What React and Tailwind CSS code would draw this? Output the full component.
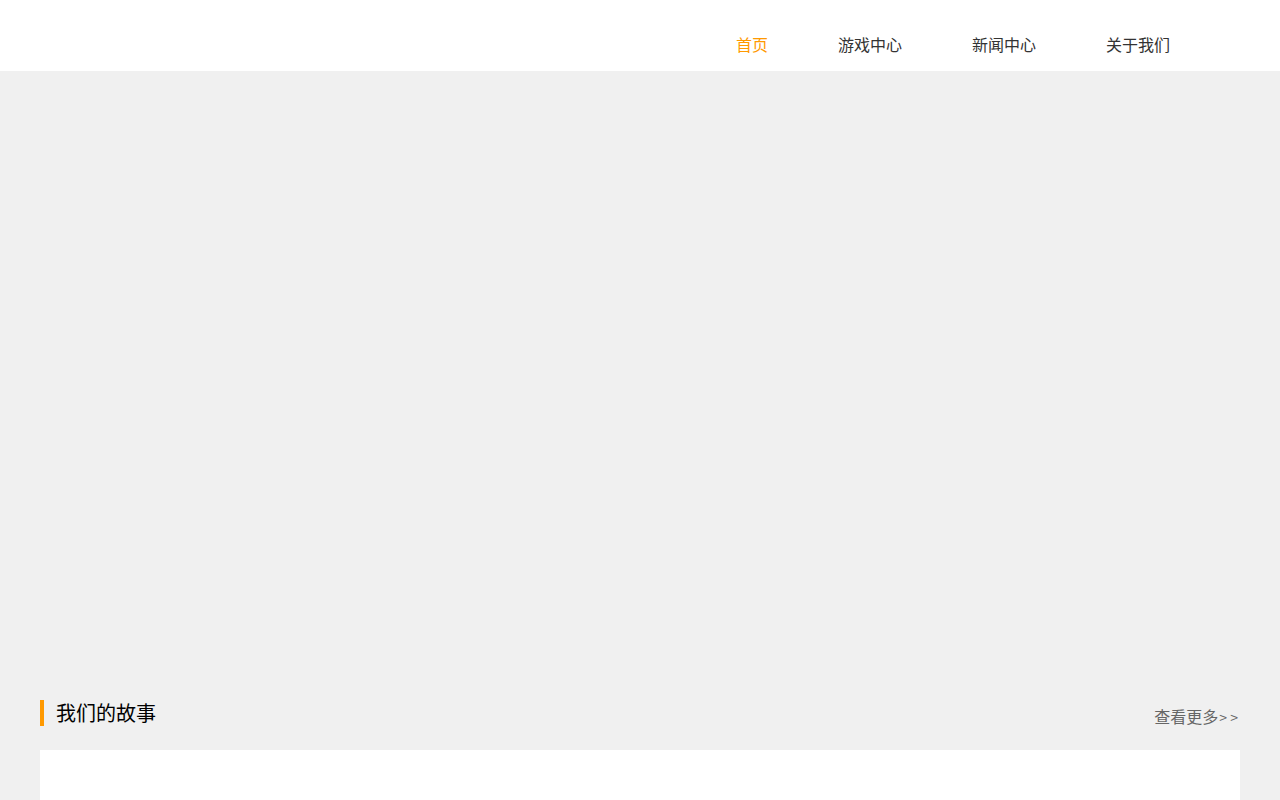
const navItems = ['首页', '游戏中心', '新闻中心', '关于我们'];

const App = () => {
  return (
    <div className="min-h-screen bg-[#f0f0f0]" style={{ fontFamily: '"Noto Sans CJK SC", "Liberation Sans", sans-serif' }}>
      {/* Header */}
      <header className="h-[71px] bg-white">
        <nav className="flex justify-end gap-[70px] pr-[110px] pt-[33px]">
          {navItems.map((item, i) => (
            <a
              key={item}
              href="#"
              className={`text-[16px] leading-[22px] ${i === 0 ? 'text-[#ff9900]' : 'text-[#333]'}`}
            >
              {item}
            </a>
          ))}
        </nav>
      </header>

      {/* Banner */}
      <div className="h-[629px]"></div>

      {/* Our story */}
      <section className="px-10">
        <div className="flex items-end justify-between h-[26px]">
          <h2 className="border-l-4 border-[#ff9900] pl-3 text-[20px] leading-[26px] text-black">我们的故事</h2>
          <a href="#" className="text-[16px] leading-[22px] text-[#666] -mb-[2px] mr-[2px]">
            查看更多<span className="text-[14px] pl-[1px]">&gt; &gt;</span>
          </a>
        </div>
        <div className="mt-6 h-[300px] bg-white"></div>
      </section>
    </div>
  );
};

export default App;
